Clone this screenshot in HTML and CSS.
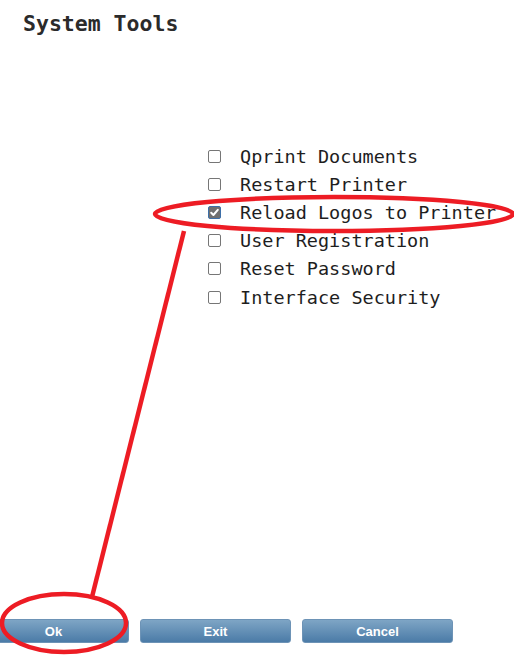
FILE: index.html
```html
<!DOCTYPE html>
<html>
<head>
<meta charset="utf-8">
<link rel="stylesheet" href="styles.css">
</head>
<body>
<div class="page">
  <h1 class="title">System Tools</h1>
  <ul class="tools">
    <li class="tool"><span class="box"></span><span class="label">Qprint Documents</span></li>
    <li class="tool"><span class="box"></span><span class="label">Restart Printer</span></li>
    <li class="tool"><span class="box checked"><svg viewBox="0 0 13 13" width="13" height="13"><path d="M3.2 6.8 L5.4 9 L9.8 3.8" fill="none" stroke="#fff" stroke-width="2" stroke-linecap="round" stroke-linejoin="round"/></svg></span><span class="label">Reload Logos to Printer</span></li>
    <li class="tool"><span class="box"></span><span class="label">User Registration</span></li>
    <li class="tool"><span class="box"></span><span class="label">Reset Password</span></li>
    <li class="tool"><span class="box"></span><span class="label">Interface Security</span></li>
  </ul>
  <div class="actions">
    <button class="btn">Ok</button>
    <button class="btn">Exit</button>
    <button class="btn">Cancel</button>
  </div>
</div>
<svg class="marks" width="514" height="663" viewBox="0 0 514 663">
  <ellipse cx="334" cy="214" rx="179" ry="17" fill="none" stroke="#ed1c24" stroke-width="4.5"/>
  <line x1="184" y1="231" x2="92" y2="597" stroke="#ed1c24" stroke-width="4.5"/>
  <ellipse cx="64" cy="623" rx="62" ry="29" fill="none" stroke="#ed1c24" stroke-width="4.5"/>
</svg>
</body>
</html>
```
FILE: styles.css
```css
html, body {
  margin: 0;
  padding: 0;
  background: #fff;
}
body {
  width: 514px;
  height: 663px;
  overflow: hidden;
  position: relative;
}
.page {
  height: 663px;
  display: flex;
  flex-direction: column;
}
.title {
  margin: 0;
  padding: 10px 0 0 23px;
  font-family: "DejaVu Sans Mono", monospace;
  font-weight: bold;
  font-size: 21.5px;
  line-height: 28px;
  color: #2b2b2b;
}
.tools {
  list-style: none;
  margin: 104px 0 0 208px;
  padding: 0;
}
.tool {
  display: flex;
  align-items: center;
  height: 28.2px;
}
.box {
  width: 13px;
  height: 13px;
  box-sizing: border-box;
  border: 1px solid #767676;
  border-radius: 2px;
  background: #fff;
  flex: none;
  display: flex;
}
.box.checked {
  background: #707070;
  border-color: #3d6fa8;
}
.box.checked svg {
  margin: -1px;
}
.label {
  margin-left: 19px;
  font-family: "DejaVu Sans Mono", monospace;
  font-size: 18.5px;
  color: #1e1e1e;
  white-space: nowrap;
}
.actions {
  margin-top: auto;
  margin-bottom: 20px;
  margin-left: -22px;
  display: flex;
  gap: 11px;
}
.btn {
  width: 151px;
  height: 24px;
  border: 1px solid #6d93b6;
  border-radius: 3px;
  background: linear-gradient(#7ea5c5, #4b7ba7);
  color: #fff;
  font-family: "Liberation Sans", Arial, sans-serif;
  font-weight: bold;
  font-size: 13px;
  padding: 0;
}
.marks {
  position: absolute;
  left: 0;
  top: 0;
  pointer-events: none;
}
```
